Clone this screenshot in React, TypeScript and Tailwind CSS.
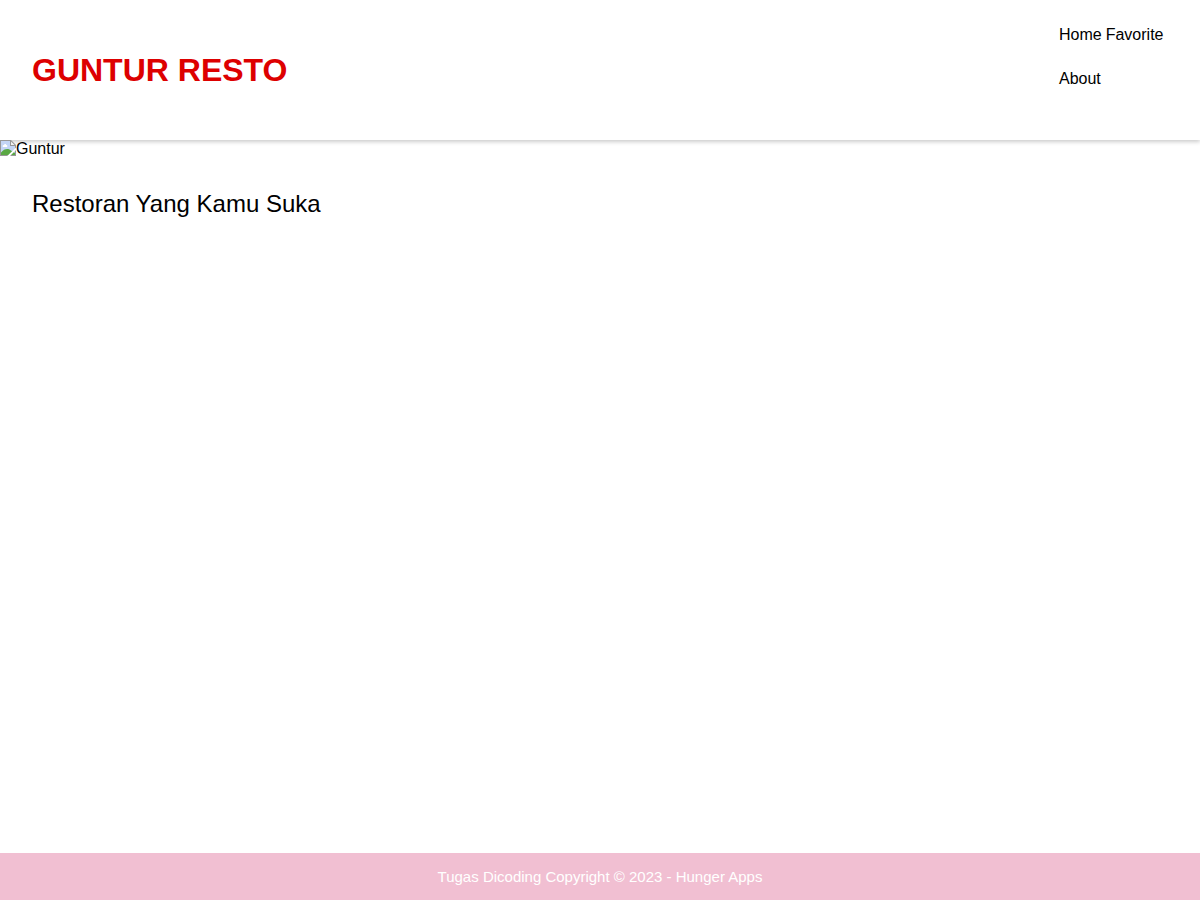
export default function App() {
  return (
    <div className="flex min-h-screen flex-col bg-white font-['Liberation_Sans',Arial,sans-serif] text-base text-black">
      <header className="flex h-[140px] items-start justify-between bg-white px-8 shadow-[0_2px_4px_rgba(0,0,0,0.2)]">
        <h1 className="self-center text-[32px] leading-9 font-bold text-[#dd0000]">GUNTUR RESTO</h1>
        <nav className="mt-[13px] w-[109px]">
          <ul className="flex flex-wrap gap-x-1">
            <li><a href="#home" className="block leading-[44px]">Home</a></li>
            <li><a href="#favorite" className="block leading-[44px]">Favorite</a></li>
            <li><a href="#about" className="block leading-[44px]">About</a></li>
          </ul>
        </nav>
      </header>
      <main className="flex-1">
        <div className="flex items-start leading-[18px]">
          <svg className="size-4" viewBox="0 0 16 16" role="img" aria-label="Picture unavailable">
            <path d="M0 0h11l5 5v11H0z" fill="#979797" />
            <path d="M1 1h9v5h5v9H1z" fill="#c3d5f5" />
            <path d="M11 1.4V5h3.6z" fill="#f2f2f2" />
            <path d="M3 7C2 5.8 3 4.9 3.9 5c.4-1.5 2.2-1.3 2.5.1C7.5 5.2 7.6 6.5 7 7z" fill="#fff" />
            <path d="M1 15v-2.5C3.5 9.4 6 8.6 9 9.2l6 3.8v2z" fill="#5aa844" />
            <path d="M16 7.5V10l-6 6H7.2z" fill="#fff" />
          </svg>
          <span>Guntur</span>
        </div>
        <section className="px-8 py-[30px]">
          <h2 className="text-2xl leading-8">Restoran Yang Kamu Suka</h2>
        </section>
      </main>
      <footer className="bg-[#f1bfd2] py-3 text-center text-[15px] leading-[23px] text-white">
        Tugas Dicoding Copyright © 2023 - Hunger Apps
      </footer>
    </div>
  );
}
